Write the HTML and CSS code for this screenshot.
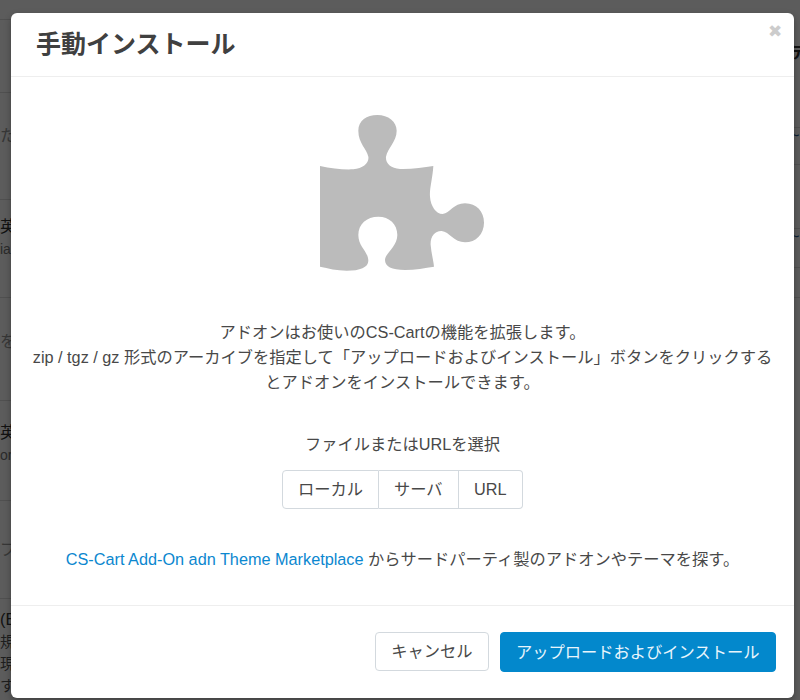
FILE: index.html

```html
<!DOCTYPE html>
<html lang="ja">
<head>
<meta charset="UTF-8">
<title>手動インストール</title>
<link rel="stylesheet" href="styles.css">
</head>
<body>

<div class="page">
    <div class="table-left">
        <div class="row row-top"></div>
        <div class="row row-head"></div>
        <div class="row row-a"><span class="faint">たたたた</span></div>
        <div class="row row-b">英語<br><span class="sub">ia</span></div>
        <div class="row row-c"><span class="faint">をを</span></div>
        <div class="row row-d">英語<br><span class="sub">or</span></div>
        <div class="row row-e"><span class="faint">ププ</span></div>
        <div class="row row-f">(E<br><span class="small">規<br>現<br>す</span></div>
    </div>
    <div class="table-right">
        <div class="side side-1"><b>テ</b></div>
        <div class="side side-2"><span class="mark">~</span></div>
        <div class="side side-3"></div>
        <div class="side side-4"><span class="mark">~</span></div>
        <div class="side side-5"></div>
    </div>
</div>

<div class="backdrop"></div>

<div class="modal">
    <div class="modal-header">
        <h3>手動インストール</h3>
        <span class="close">&#10006;</span>
    </div>
    <div class="modal-body">
        <svg class="puzzle" width="200" height="180" viewBox="0 0 600 540">
            <path fill="#bbbbbb" d="M60 198 C95 205 130 210 160 208 C190 205 208 188 205 170 C200 145 175 130 175 92 C175 62 200 45 232 45 C265 45 290 65 290 92 C290 125 262 145 258 170 C256 190 272 205 300 207 C335 208 370 203 400 198 C398 235 388 265 390 290 C392 318 408 342 428 342 C450 340 460 310 495 310 C530 310 552 335 552 368 C552 402 528 427 495 427 C462 427 448 395 425 393 C405 392 390 410 392 435 C394 460 400 480 402 500 C375 504 345 510 315 510 C275 510 255 500 255 480 C255 460 292 440 292 405 C292 372 268 350 235 350 C200 350 175 372 175 405 C175 440 205 455 205 482 C205 502 180 512 140 512 C110 512 85 505 60 500 Z"/>
        </svg>
        <p class="intro">アドオンはお使いのCS-Cartの機能を拡張します。<br>zip / tgz / gz 形式のアーカイブを指定して「アップロードおよびインストール」ボタンをクリックするとアドオンをインストールできます。</p>
        <p class="select-label">ファイルまたはURLを選択</p>
        <div class="btn-group">
            <button class="btn">ローカル</button>
            <button class="btn">サーバ</button>
            <button class="btn">URL</button>
        </div>
        <p class="market"><a href="#">CS-Cart Add-On adn Theme Marketplace</a> からサードパーティ製のアドオンやテーマを探す。</p>
    </div>
    <div class="modal-footer">
        <button class="btn btn-cancel">キャンセル</button>
        <button class="btn btn-primary">アップロードおよびインストール</button>
    </div>
</div>

</body>
</html>
```

FILE: styles.css

```css
* {
    box-sizing: border-box;
}

body {
    margin: 0;
    height: 700px;
    overflow: hidden;
    background: #fff;
    color: #333;
    font-family: "Liberation Sans", "Noto Sans CJK JP", sans-serif;
    font-size: 16.25px;
}

/* page behind the dialog, only the edges show */
.page {
    display: flex;
    justify-content: space-between;
    height: 700px;
}

.table-left {
    width: 200px;
}

.row {
    border-bottom: 1px solid #ddd;
    line-height: 22px;
    white-space: nowrap;
}

.row-top { height: 20px; }
.row-head { height: 73px; }
.row-a { height: 107px; padding-top: 31px; }
.row-b { height: 98px; padding-top: 15px; }
.row-c { height: 103px; padding-top: 32px; }
.row-d { height: 100px; padding-top: 20px; }
.row-e { height: 98px; padding-top: 37px; }
.row-f { height: 101px; padding-top: 9px; border-bottom: 0; }

.faint {
    color: #999;
}

.sub {
    color: #777;
    font-size: 14px;
}

.small {
    color: #555;
    font-size: 15px;
    line-height: 20px;
}

.table-right {
    width: 10px;
}

.side {
    border-bottom: 1px solid #ddd;
    line-height: 20px;
    overflow: hidden;
}

.side-1 { height: 128px; padding-top: 42px; }
.side-2 { height: 37px; color: #258; }
.side-3 { height: 64px; }
.side-4 { height: 39px; color: #258; }
.side-5 { height: 30px; }

.mark {
    display: block;
    margin-top: -3px;
}

.backdrop {
    position: absolute;
    inset: 0;
    background: #000;
    opacity: 0.64;
}

.modal {
    position: absolute;
    left: 11px;
    top: 13px;
    width: 783px;
    height: 685px;
    display: flex;
    flex-direction: column;
    background: #fff;
    border-radius: 6px;
    box-shadow: 0 3px 7px rgba(0, 0, 0, 0.3);
    color: #484848;
}

.modal-header {
    position: relative;
    height: 64px;
    padding: 0 25px;
    border-bottom: 1px solid #eee;
}

.modal-header h3 {
    margin: 0;
    font-size: 25px;
    line-height: 62px;
    font-weight: bold;
    color: #404040;
}

.close {
    position: absolute;
    top: 9px;
    right: 12px;
    font-size: 17px;
    line-height: 20px;
    color: #ccc;
}

.modal-body {
    flex: 1;
    display: flex;
    flex-direction: column;
    align-items: center;
    padding: 23px 20px 0;
    text-align: center;
    line-height: 25px;
}

.puzzle {
    display: block;
    margin-right: 5px;
}

.intro {
    margin: 40px 0 0;
}

.select-label {
    margin: 37px 0 0;
}

.btn-group {
    display: flex;
    margin-top: 13px;
}

.btn {
    height: 39px;
    padding: 0 15px;
    background: #fff;
    border: 1px solid #d3d9de;
    color: #484848;
    font: inherit;
    line-height: 25px;
}

.btn-group .btn:first-child {
    border-radius: 4px 0 0 4px;
}

.btn-group .btn + .btn {
    border-left: 0;
}

.btn-group .btn:last-child {
    padding: 0 15.5px;
    border-radius: 0 4px 4px 0;
}

.market {
    margin: 38px 0 0;
}

.market a {
    color: #0b87cf;
    text-decoration: none;
}

.modal-footer {
    height: 93px;
    display: flex;
    justify-content: flex-end;
    align-items: flex-start;
    gap: 11px;
    padding: 26px 18px 0;
    border-top: 1px solid #eee;
}

.btn-cancel {
    border-radius: 4px;
}

.btn-primary {
    height: 40px;
    padding: 0 15.5px;
    background: #0388cc;
    border-color: #0388cc;
    border-radius: 4px;
    color: #e8f5fc;
}
```
